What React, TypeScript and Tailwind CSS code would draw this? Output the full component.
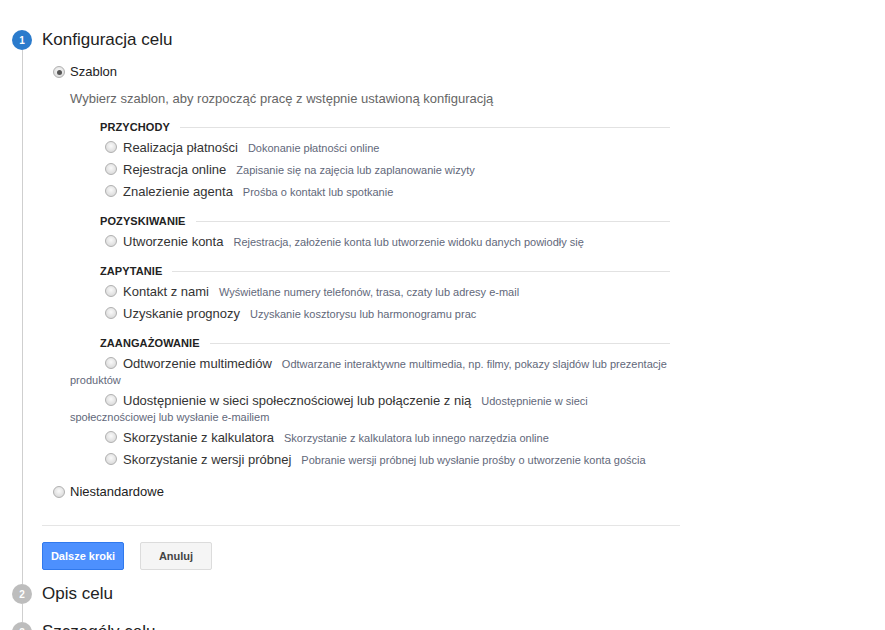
import React from 'react';

type Goal = { label: string; desc: string; tight?: boolean };
type Section = { title: string; items: Goal[] };

const sections: Section[] = [
  {
    title: 'PRZYCHODY',
    items: [
      { label: 'Realizacja płatności', desc: 'Dokonanie płatności online' },
      { label: 'Rejestracja online', desc: 'Zapisanie się na zajęcia lub zaplanowanie wizyty' },
      { label: 'Znalezienie agenta', desc: 'Prośba o kontakt lub spotkanie' },
    ],
  },
  {
    title: 'POZYSKIWANIE',
    items: [
      { label: 'Utworzenie konta', desc: 'Rejestracja, założenie konta lub utworzenie widoku danych powiodły się' },
    ],
  },
  {
    title: 'ZAPYTANIE',
    items: [
      { label: 'Kontakt z nami', desc: 'Wyświetlane numery telefonów, trasa, czaty lub adresy e-mail' },
      { label: 'Uzyskanie prognozy', desc: 'Uzyskanie kosztorysu lub harmonogramu prac' },
    ],
  },
  {
    title: 'ZAANGAŻOWANIE',
    items: [
      { label: 'Odtworzenie multimediów', desc: 'Odtwarzane interaktywne multimedia, np. filmy, pokazy slajdów lub prezentacje produktów' },
      { label: 'Udostępnienie w sieci społecznościowej lub połączenie z nią', desc: 'Udostępnienie w sieci społecznościowej lub wysłanie e-mailiem', tight: true },
      { label: 'Skorzystanie z kalkulatora', desc: 'Skorzystanie z kalkulatora lub innego narzędzia online', tight: true },
      { label: 'Skorzystanie z wersji próbnej', desc: 'Pobranie wersji próbnej lub wysłanie prośby o utworzenie konta gościa' },
    ],
  },
];

const Radio = ({ checked = false }: { checked?: boolean }) => (
  <span className="inline-flex w-[12px] h-[12px] rounded-full border border-[#b0b0b0] bg-[radial-gradient(circle_at_50%_40%,#fafafa_0%,#dedede_70%,#cfcfcf_100%)] items-center justify-center align-[-1px] shrink-0">
    {checked && <span className="w-[5px] h-[5px] rounded-full bg-[#555]" />}
  </span>
);

const StepCircle = ({ n, active }: { n: number; active?: boolean }) => (
  <div
    className={
      'w-[20px] h-[20px] rounded-full flex items-center justify-center text-[10px] font-bold text-white shrink-0 ' +
      (active ? 'bg-[#2b7bcc]' : 'bg-[#bdbdbd]')
    }
  >
    {n}
  </div>
);

export default function App() {
  return (
    <div className="w-[885px] h-[630px] overflow-hidden bg-white pl-[12px] text-[#222]" style={{ fontFamily: '"Liberation Sans", Arial, sans-serif' }}>
      {/* step 1 */}
      <div className="flex pt-[30px]">
        <div className="w-[20px] flex flex-col items-center">
          <StepCircle n={1} active />
          <div className="flex-1 w-px bg-[#cfcfcf]" />
        </div>
        <div className="ml-[10px] pb-[14px]">
          <div className="h-[20px] leading-[20px] text-[17px]">Konfiguracja celu</div>

          <div className="mt-[14px] ml-[11px] h-[16px] flex items-center gap-[5px] text-[13px]">
            <Radio checked />
            <span>Szablon</span>
          </div>
          <div className="mt-[11px] ml-[28px] h-[16px] leading-[16px] text-[13px] text-[#666]">
            Wybierz szablon, aby rozpocząć pracę z wstępnie ustawioną konfiguracją
          </div>

          <div className="ml-[28px] w-[600px]">
            {sections.map((s, si) => (
              <div key={s.title} className={si === 0 ? 'mt-[12px]' : 'mt-[13px]'}>
                <div className="pl-[30px] h-[16px] flex items-center">
                  <span className="text-[11px] font-bold text-[#222] tracking-[0.1px]">{s.title}</span>
                  <div className="flex-1 h-px bg-[#e2e2e2] ml-[10px]" />
                </div>
                {s.items.map((it, i) => (
                  <div
                    key={it.label}
                    className={(i === 0 ? 'mt-[5px]' : it.tight ? 'mt-[5px]' : 'mt-[6px]') + ' indent-[35px] leading-[16px] text-[13px] text-[#333]'}
                  >
                    <Radio />
                    <span className="ml-[6px]">{it.label}</span>
                    <span className="ml-[10px] text-[11px] text-[#62687a]">{it.desc}</span>
                  </div>
                ))}
              </div>
            ))}
          </div>

          <div className="mt-[16px] ml-[11px] h-[16px] flex items-center gap-[5px] text-[13px]">
            <Radio />
            <span>Niestandardowe</span>
          </div>

          <div className="mt-[25px] w-[638px] h-px bg-[#e5e5e5]" />

          <div className="mt-[16px] flex gap-[16px]">
            <button className="h-[28px] w-[82px] rounded-[2px] border border-[#3079ed] bg-[#4d90fe] text-white text-[11px] font-bold">
              Dalsze kroki
            </button>
            <button className="h-[28px] w-[72px] rounded-[2px] border border-[#dcdcdc] bg-[#f5f5f5] text-[#444] text-[11px] font-bold">
              Anuluj
            </button>
          </div>
        </div>
      </div>

      {/* step 2 */}
      <div className="flex">
        <div className="w-[20px] flex flex-col items-center">
          <StepCircle n={2} />
          <div className="h-[18px] w-px bg-[#cfcfcf]" />
        </div>
        <div className="ml-[10px] h-[20px] leading-[20px] text-[17px]">Opis celu</div>
      </div>

      {/* step 3 */}
      <div className="flex">
        <div className="w-[20px] flex flex-col items-center">
          <StepCircle n={3} />
        </div>
        <div className="ml-[10px] h-[20px] leading-[20px] text-[17px]">Szczegóły celu</div>
      </div>
    </div>
  );
}
